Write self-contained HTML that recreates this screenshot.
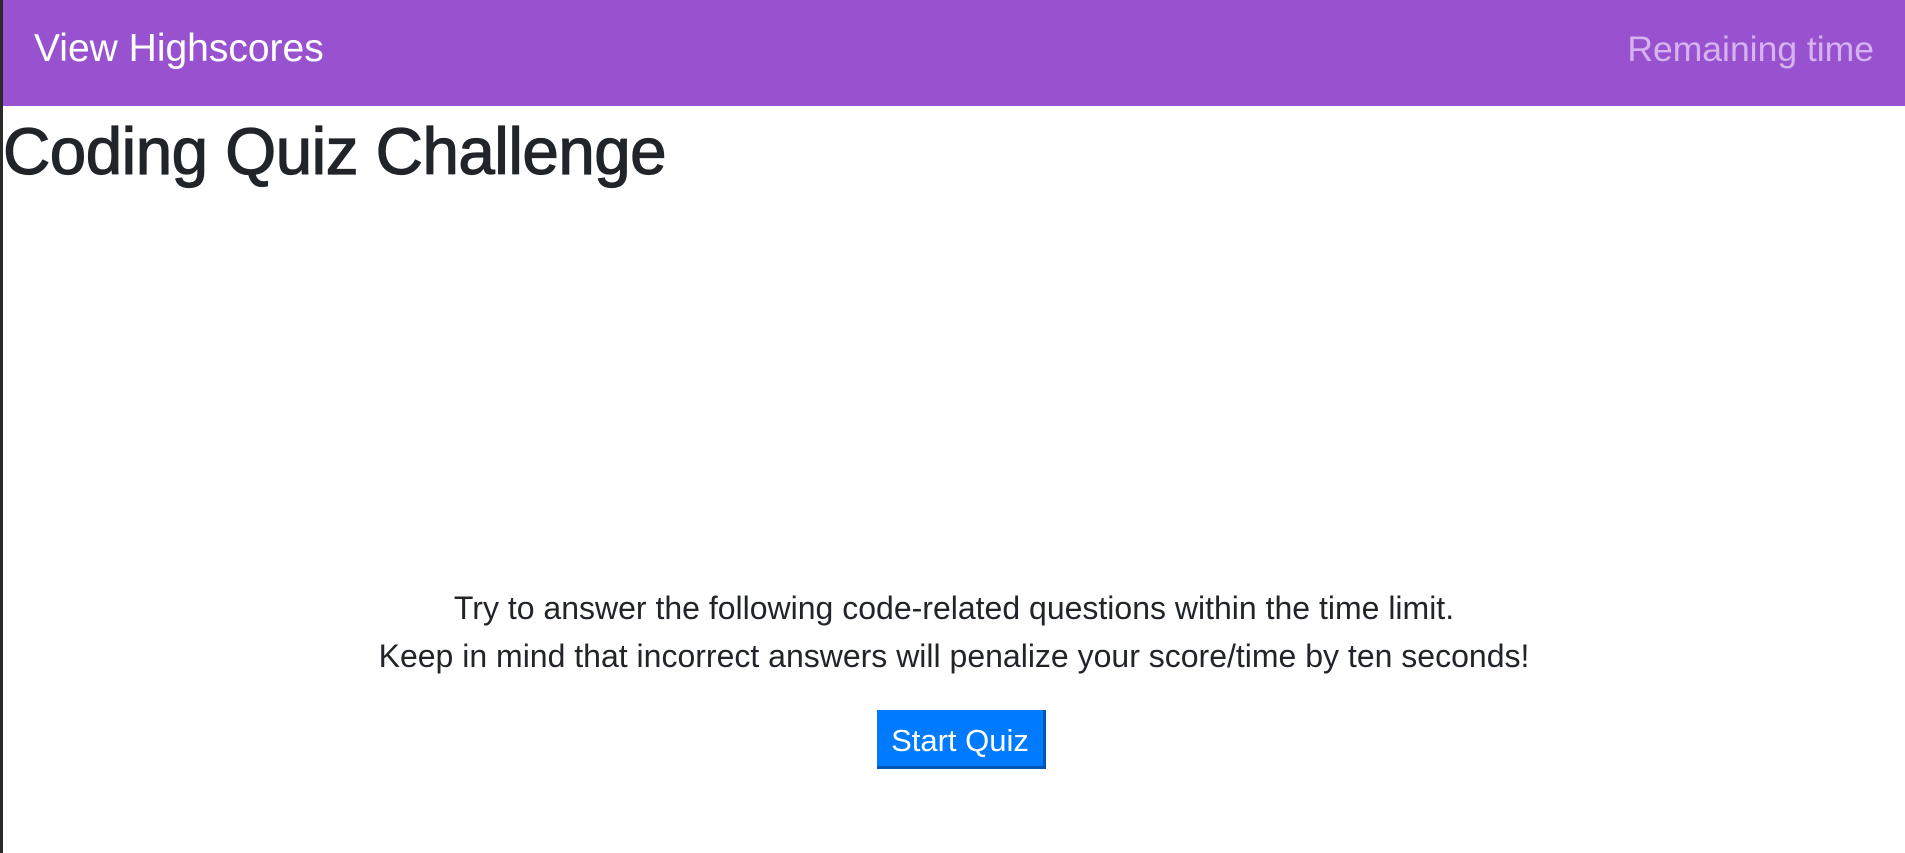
<!DOCTYPE html>
<html><head><meta charset="utf-8"><style>
html,body{margin:0;padding:0;width:1905px;height:853px;overflow:hidden;background:#fff;font-family:"Liberation Sans",sans-serif;color:#212529}
.bl{position:absolute;left:0;top:0;width:3px;height:853px;background:#2a2a2a}
.hdr{position:absolute;left:3px;top:0;width:1902px;height:106px;background:#9852cf}
.vh{position:absolute;left:31px;top:27px;font-size:39px;color:#fff;white-space:nowrap}
.rt{position:absolute;right:31px;top:29px;font-size:35.5px;color:#d6b3ee;white-space:nowrap}
h1{position:absolute;left:3px;top:114px;margin:0;font-size:65.5px;font-weight:normal;white-space:nowrap;letter-spacing:-0.5px;-webkit-text-stroke:1.2px #212529}
p{position:absolute;left:3px;width:1902px;text-align:center;margin:0;font-size:32px;white-space:nowrap}
.btn{position:absolute;left:877px;top:710px;width:166px;height:56px;background:#007bff;border-right:3px solid #0056b3;border-bottom:3px solid #0056b3;color:#fff;font-size:31px;line-height:62px;text-align:center}
</style></head><body>
<div class="bl"></div>
<div class="hdr"><div class="vh">View Highscores</div><div class="rt">Remaining time</div></div>
<h1>Coding Quiz Challenge</h1>
<p style="top:590px">Try to answer the following code-related questions within the time limit.</p>
<p style="top:638px">Keep in mind that incorrect answers will penalize your score/time by ten seconds!</p>
<div class="btn">Start Quiz</div>
</body></html>
